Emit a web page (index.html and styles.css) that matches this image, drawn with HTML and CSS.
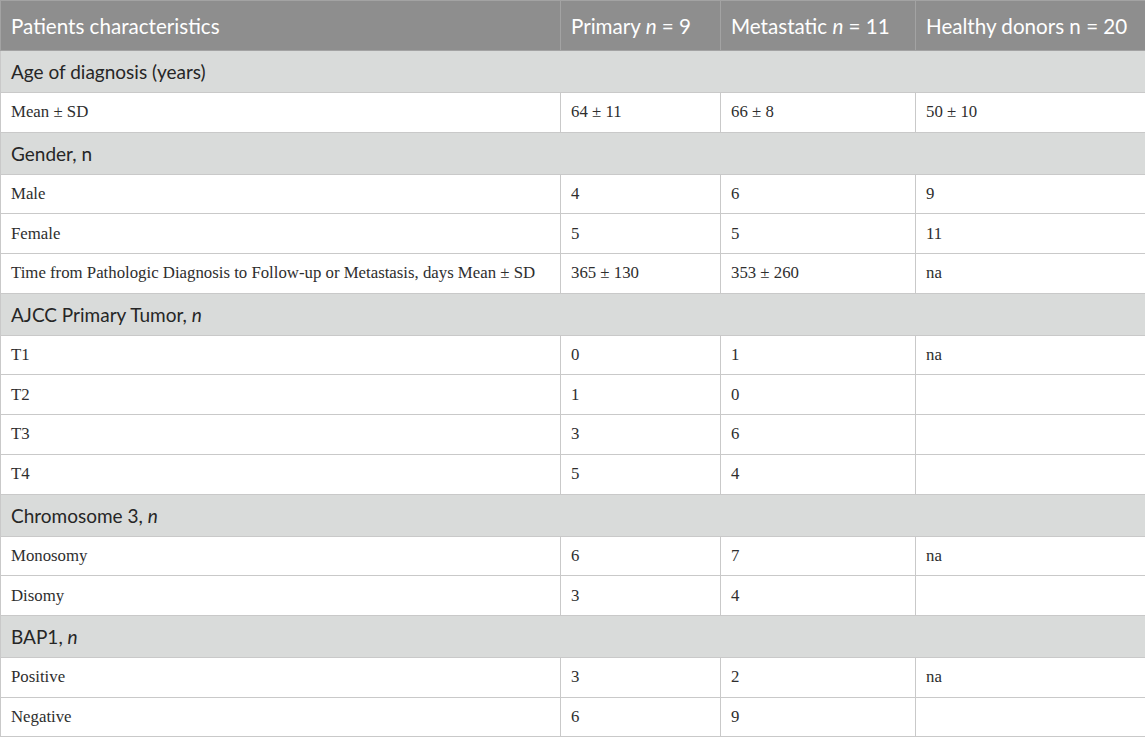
FILE: index.html
```html
<!DOCTYPE html>
<html lang="en">
<head>
<meta charset="utf-8">
<title>Patients characteristics</title>
<link rel="stylesheet" href="styles.css">
</head>
<body>
<table class="tbl">
  <colgroup>
    <col class="c1"><col class="c2"><col class="c3"><col class="c4">
  </colgroup>
  <thead>
    <tr class="head">
      <th>Patients characteristics</th>
      <th>Primary <i>n</i> = 9</th>
      <th>Metastatic <i>n</i> = 11</th>
      <th>Healthy donors n = 20</th>
    </tr>
  </thead>
  <tbody>
    <tr class="sec"><td colspan="4">Age of diagnosis (years)</td></tr>
    <tr class="row"><td>Mean ± SD</td><td>64 ± 11</td><td>66 ± 8</td><td>50 ± 10</td></tr>
    <tr class="sec"><td colspan="4">Gender, n</td></tr>
    <tr class="row"><td>Male</td><td>4</td><td>6</td><td>9</td></tr>
    <tr class="row"><td>Female</td><td>5</td><td>5</td><td>11</td></tr>
    <tr class="row"><td>Time from Pathologic Diagnosis to Follow-up or Metastasis, days Mean ± SD</td><td>365 ± 130</td><td>353 ± 260</td><td>na</td></tr>
    <tr class="sec"><td colspan="4">AJCC Primary Tumor, <i>n</i></td></tr>
    <tr class="row"><td>T1</td><td>0</td><td>1</td><td>na</td></tr>
    <tr class="row"><td>T2</td><td>1</td><td>0</td><td></td></tr>
    <tr class="row"><td>T3</td><td>3</td><td>6</td><td></td></tr>
    <tr class="row"><td>T4</td><td>5</td><td>4</td><td></td></tr>
    <tr class="sec"><td colspan="4">Chromosome 3, <i>n</i></td></tr>
    <tr class="row"><td>Monosomy</td><td>6</td><td>7</td><td>na</td></tr>
    <tr class="row"><td>Disomy</td><td>3</td><td>4</td><td></td></tr>
    <tr class="sec"><td colspan="4">BAP1, <i>n</i></td></tr>
    <tr class="row"><td>Positive</td><td>3</td><td>2</td><td>na</td></tr>
    <tr class="row"><td>Negative</td><td>6</td><td>9</td><td></td></tr>
  </tbody>
</table>
</body>
</html>
```
FILE: styles.css
```css
html, body {
  margin: 0;
  padding: 0;
  background: #ffffff;
}

.tbl {
  width: 1145px;
  border-collapse: collapse;
  table-layout: fixed;
}

.c1 { width: 560px; }
.c2 { width: 160px; }
.c3 { width: 195px; }
.c4 { width: 230px; }

.tbl th,
.tbl td {
  border: 1px solid #c9c9c9;
  padding: 0 10px;
  text-align: left;
  vertical-align: middle;
  white-space: nowrap;
}

.head th {
  height: 49px;
  background: #8e8e8e;
  color: #ffffff;
  font-family: "Lato", "Liberation Sans", sans-serif;
  font-weight: 400;
  font-size: 20.6px;
  border-color: #a3a3a3;
}

.sec td {
  height: 41px;
  background: #d9dbda;
  color: #262626;
  font-family: "Lato", "Liberation Sans", sans-serif;
  font-size: 19px;
}

.row td {
  height: 38.7px;
  background: #ffffff;
  color: #2e2e2e;
  font-family: "Liberation Serif", "Times New Roman", serif;
  font-size: 16.8px;
}
```
